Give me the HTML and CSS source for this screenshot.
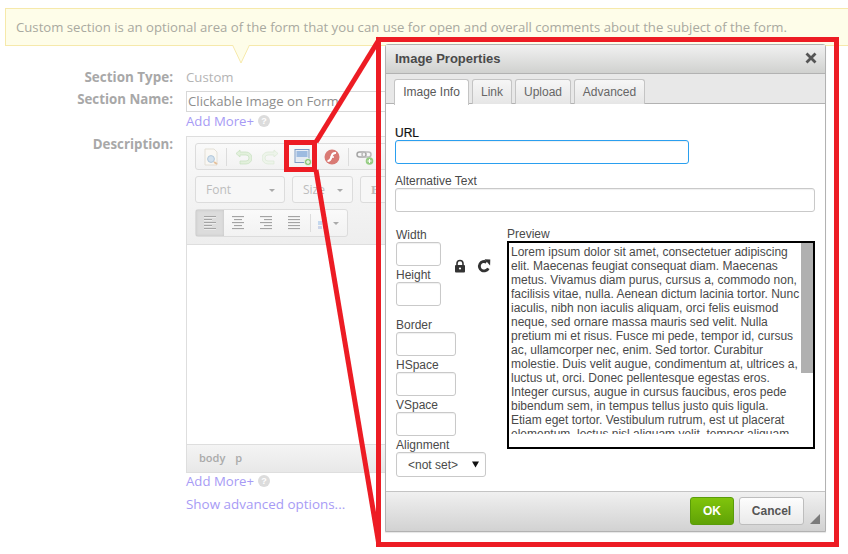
FILE: index.html
```html
<!DOCTYPE html>
<html lang="en">
<head>
<meta charset="utf-8">
<title>Image Properties</title>
<link rel="stylesheet" href="styles.css">
</head>
<body>
<div class="page">
  <div class="banner">Custom section is an optional area of the form that you can use for open and overall comments about the subject of the form.
    <svg class="tip" viewBox="0 0 18 19" width="18" height="19"><path d="M.5 0L9 18 17.500 0z" fill="#fefde9"/><path d="M.5 0L9 18 17.500 0" fill="none" stroke="#f6e9ab"/></svg>
  </div>
  <div class="form">
    <div class="row row-type"><div class="lbl">Section Type:</div><div class="val">Custom</div></div>
    <div class="row row-name"><div class="lbl">Section Name:</div>
      <div class="fld"><div class="nameinput">Clickable Image on Form</div>
        <div class="more">Add More+ <span class="help">?</span></div></div></div>
    <div class="row row-desc"><div class="lbl desc-lbl">Description:</div>
      <div class="fld">
        <div class="editor">
          <div class="toolbar">
            <div class="tgroup t1">
              <svg class="ti faded" viewBox="0 0 18 18" width="18" height="18"><path d="M3 1h9l3 3v13H3z" fill="#fbf9f3" stroke="#ddd8cc"/><circle cx="9" cy="11" r="3.400" fill="#c9dcec" stroke="#9bb8d2"/><path d="M12 14l3 2" stroke="#e0b080" stroke-width="2"/></svg>
              <span class="tsep"></span>
              <svg class="ti" viewBox="0 0 18 18" width="18" height="18"><path d="M6 2L2 5.500 6 9V7h6a3 3 0 0 1 0 6H6v3h6a6 6 0 0 0 0-12H6z" fill="#e2f0dc" stroke="#c6dfbe" stroke-width=".7"/></svg>
              <svg class="ti" viewBox="0 0 18 18" width="18" height="18"><path d="M12 2l4 3.500L12 9V7H6a3 3 0 0 0 0 6h6v3H6A6 6 0 0 1 6 4h6z" fill="#edf4ea" stroke="#dbe8d6" stroke-width=".7"/></svg>
              <svg class="ti ti-img" viewBox="0 0 18 18" width="18" height="18"><rect x="1" y="1.500" width="14" height="13" fill="#e8eef6" stroke="#7f9cc4"/><path d="M2.500 3h11v6h-11z" fill="#9dbbe0"/><path d="M2.500 9h11v4h-11z" fill="#e4eaf2"/><circle cx="14" cy="14" r="3.600" fill="#8cc77a" stroke="#fff" stroke-width=".6"/><path d="M14 12v4M12 14h4" stroke="#fff"/></svg>
              <svg class="ti ti-fl" viewBox="0 0 18 18" width="18" height="18"><circle cx="9" cy="9" r="7.500" fill="#d97a74"/><path d="M13 5c-3-.5-4 1-4.500 3.500S7 13 4.500 13" fill="none" stroke="#fff" stroke-width="2"/><path d="M7.500 9H11" stroke="#fff" stroke-width="1.500"/></svg>
              <span class="tsep"></span>
              <svg class="ti" viewBox="0 0 18 18" width="18" height="18"><rect x="1" y="4" width="9" height="5" rx="2.500" fill="none" stroke="#a6a6a6" stroke-width="1.500"/><rect x="6" y="4" width="9" height="5" rx="2.500" fill="none" stroke="#bcbcbc" stroke-width="1.500"/><circle cx="13.500" cy="13" r="3.800" fill="#96cd84"/><path d="M13.500 11v4M11.500 13h4" stroke="#fff"/></svg>
            </div>
            <div class="trow">
              <div class="combo c-font">Font<span class="caret"></span></div>
              <div class="combo c-size">Size<span class="caret"></span></div>
              <div class="combo c-fmt"><span class="serif-b">B</span></div>
            </div>
            <div class="tgroup t3">
              <span class="al active"><i class="l1"></i><i class="l2"></i><i class="l1"></i><i class="l2"></i><i class="l1"></i></span>
              <span class="al center"><i class="l1"></i><i class="l2"></i><i class="l1"></i><i class="l2"></i><i class="l1"></i></span>
              <span class="al right"><i class="l1"></i><i class="l2"></i><i class="l1"></i><i class="l2"></i><i class="l1"></i></span>
              <span class="al"><i class="l1"></i><i class="l1"></i><i class="l1"></i><i class="l1"></i><i class="l1"></i></span>
              <span class="tsep"></span>
              <svg class="ti-col" viewBox="0 0 14 14" width="14" height="14"><rect x="6" y="1" width="4" height="3" fill="#f8ecbc"/><rect x="1" y="5" width="4" height="4" fill="#c4d8ee"/><rect x="6" y="5" width="4" height="4" fill="#c8dcf2"/><rect x="1" y="10" width="4" height="3" fill="#ccd4e8"/><rect x="6" y="10" width="4" height="3" fill="#f8c8dc"/></svg>
              <span class="caret c3"></span>
            </div>
          </div>
          <div class="edit-body"></div>
          <div class="pathbar"><span>body</span><span>p</span></div>
        </div>
        <div class="more more2">Add More+ <span class="help">?</span></div>
        <div class="adv">Show advanced options...</div>
      </div>
    </div>
  </div>
</div>

<div class="dialog">
  <div class="dtitle"><span>Image Properties</span><svg class="dclose" viewBox="0 0 12 12" width="12" height="12"><path d="M1.500 1.500l9 9M10.500 1.500l-9 9" stroke="#555" stroke-width="2.800"/></svg></div>
  <div class="tabs">
    <div class="tab on">Image Info</div><div class="tab t-link">Link</div><div class="tab t-up">Upload</div><div class="tab t-adv">Advanced</div>
  </div>
  <div class="dbody">
    <label class="f-url">URL</label>
    <div class="inp url"></div>
    <label class="f-alt">Alternative Text</label>
    <div class="inp alt"></div>
    <div class="cols">
      <div class="leftcol">
        <div class="sizes">
          <div class="wh">
            <label>Width</label><div class="inp small"></div>
            <label>Height</label><div class="inp small"></div>
          </div>
          <svg class="lock" viewBox="0 0 12 14" width="12" height="14"><path d="M3 7V4.500a3 3 0 0 1 6 0V7" fill="none" stroke="#333" stroke-width="1.600"/><rect x="1" y="6" width="10" height="7.500" rx="1" fill="#333"/><circle cx="6" cy="9.500" r="1.100" fill="#fff"/></svg>
          <svg class="refresh" viewBox="0 0 14 14" width="14" height="14"><path d="M11.300 9.300A4.700 4.700 0 1 1 9.500 3.200" fill="none" stroke="#333" stroke-width="2.800"/><path d="M7.500 .2l5.800 .2-.2 6z" fill="#333"/></svg>
        </div>
        <label class="f-border">Border</label><div class="inp mid"></div>
        <label>HSpace</label><div class="inp mid"></div>
        <label>VSpace</label><div class="inp mid"></div>
        <label>Alignment</label>
        <div class="inp sel"><span>&lt;not set&gt;</span><svg viewBox="0 0 8 7" width="7" height="7"><path d="M0 0h8L4 7z" fill="#111"/></svg></div>
      </div>
      <div class="rightcol">
        <label>Preview</label>
        <div class="preview">
          <div class="ptext">Lorem ipsum dolor sit amet, consectetuer adipiscing elit. Maecenas feugiat consequat diam. Maecenas metus. Vivamus diam purus, cursus a, commodo non, facilisis vitae, nulla. Aenean dictum lacinia tortor. Nunc iaculis, nibh non iaculis aliquam, orci felis euismod neque, sed ornare massa mauris sed velit. Nulla pretium mi et risus. Fusce mi pede, tempor id, cursus ac, ullamcorper nec, enim. Sed tortor. Curabitur molestie. Duis velit augue, condimentum at, ultrices a, luctus ut, orci. Donec pellentesque egestas eros. Integer cursus, augue in cursus faucibus, eros pede bibendum sem, in tempus tellus justo quis ligula. Etiam eget tortor. Vestibulum rutrum, est ut placerat elementum, lectus nisl aliquam velit, tempor aliquam eros nunc nonummy metus.</div>
          <div class="thumb"></div>
        </div>
      </div>
    </div>
  </div>
  <div class="dfoot">
    <div class="btn ok">OK</div><div class="btn cancel">Cancel</div>
    <svg class="grip" viewBox="0 0 10 10" width="10" height="10"><path d="M10 0v10H0z" fill="#7b7b7b"/></svg>
  </div>
</div>

<svg class="marks" width="848" height="554" viewBox="0 0 848 554">
  <rect x="378.500" y="39.500" width="458" height="505" fill="none" stroke="#ed1c24" stroke-width="5"/>
  <rect x="286.500" y="142.500" width="28" height="27" fill="none" stroke="#ed1c24" stroke-width="5"/>
  <path d="M316 142L380 38" stroke="#ed1c24" stroke-width="5" fill="none"/>
  <path d="M316 170L379 545" stroke="#ed1c24" stroke-width="5" fill="none"/>
</svg>
</body>
</html>
```
FILE: styles.css
```css
* { box-sizing: border-box; }
html, body { margin: 0; padding: 0; background: #fff; }
body { width: 848px; height: 554px; overflow: hidden; position: relative; font-family: "Open Sans", sans-serif; }
.page { padding-top: 8px; }

.banner { position: relative; margin-left: 5px; height: 38px; background: #fefde9; border: 1px solid #f6e9ab; border-right: 0; color: #a9a9a0; font-size: 13.160px; line-height: 37px; padding-left: 10px; white-space: nowrap; }
.tip { position: absolute; left: 226px; top: 36px; display: block; }

.form { padding-top: 21px; }
.row { display: grid; grid-template-columns: 173px 1fr; column-gap: 13px; }
.lbl { text-align: right; font-size: 13.300px; font-weight: 700; color: #a8a8a8; line-height: 20px; }
.row-type .lbl { font-size: 13.450px; }
.val { font-size: 13.200px; color: #b4b4b4; line-height: 20px; }
.row-type { height: 22px; }
.nameinput { width: 300px; height: 21px; margin-top: 2px; border: 1px solid #d8d8d8; font-size: 13.200px; color: #8e8e8e; line-height: 19px; padding-left: 1px; white-space: nowrap; overflow: hidden; }
.more { font-size: 13.200px; color: #a79bf5; line-height: 18px; height: 18px; display: flex; align-items: center; gap: 4px; }
.help { width: 12px; height: 12px; border-radius: 50%; background: #dcdcdc; color: #fff; font: 700 9px/12px "Liberation Sans", sans-serif; text-align: center; }
.row-desc { margin-top: 6px; }
.desc-lbl { margin-top: -2px; }

.editor { width: 300px; height: 337px; border: 1px solid #dedede; border-right: 0; background: #fff; }
.toolbar { height: 108px; background: linear-gradient(#fafafa, #eeeeee); border-bottom: 1px solid #dedede; padding: 6px 0 0 8px; display: flex; flex-direction: column; gap: 6px; }
.tgroup { border: 1px solid #dcdcdc; border-radius: 3px; background: linear-gradient(#fafafa, #f2f2f2); display: flex; align-items: center; }
.t1 { width: 260px; height: 27px; padding-left: 6px; }
.ti { display: block; flex: none; margin-right: 10px; }
.faded { opacity: .75; }
.tsep { width: 1px; height: 18px; background: #dcdcdc; flex: none; margin-right: 7px; }
.t1 .ti:first-child { margin-right: 6px; }
.ti-img { margin-left: 4px; }
.ti-fl { margin-left: 1px; margin-right: 7px; }
.trow { display: flex; gap: 7px; height: 27px; }
.combo { position: relative; height: 27px; border: 1px solid #dcdcdc; border-radius: 3px; background: #f7f7f7; color: #bdbdbd; font-size: 12px; line-height: 25px; padding-left: 10px; }
.c-font { width: 90px; }
.c-size { width: 61px; }
.c-fmt { width: 60px; }
.serif-b { font: 700 13px/25px "Liberation Serif", serif; color: #bbb; }
.caret { position: absolute; right: 9px; top: 12px; width: 0; height: 0; border: 3px solid transparent; border-top: 3px solid #aaa; }
.t3 { width: 153px; height: 28px; }
.al { width: 28px; height: 26px; display: flex; flex-direction: column; justify-content: center; gap: 1px; padding: 0 8px; flex: none; }
.al i { display: block; height: 2px; border-top: 1px solid #a4a4a4; border-bottom: 1px solid #ececec; }
.al .l2 { width: 8px; }
.al.center { align-items: center; }
.al.right { align-items: flex-end; }
.al.center .l1, .al.right .l1 { width: 12px; }
.al.active { background: #dcdcdc; box-shadow: inset 0 0 3px #c4c4c4; }
.t3 .tsep { margin: 0 6px 0 2px; }
.ti-col { flex: none; }
.caret.c3 { position: static; display: block; margin: 3px 0 0 2px; }
.edit-body { height: 200px; border-bottom: 1px solid #dedede; }
.pathbar { height: 27px; background: linear-gradient(#f4f4f4, #e8e8e8); padding-left: 12px; font-size: 11px; font-weight: 600; color: #aaa; line-height: 26px; display: flex; gap: 10px; }
.more2 { margin-top: -2px; height: 20px; line-height: 20px; }
.adv { font-size: 13.450px; color: #a79bf5; line-height: 20px; margin-top: 3px; }

.dialog { position: absolute; left: 385px; top: 44px; width: 441px; height: 488px; background: #fff; border: 1px solid #b2b2b2; border-radius: 3px 3px 0 0; display: flex; flex-direction: column; font-family: "Liberation Sans", sans-serif; box-shadow: 0 1px 1px rgba(0,0,0,.1); }
.dtitle { height: 29px; flex: none; background: linear-gradient(#f1f1f1, #d0d1cf); border-bottom: 1px solid #b2b2b2; display: flex; align-items: center; justify-content: space-between; padding: 0 8px 2px 9px; font-size: 13px; font-weight: 700; color: #4a4a4a; }
.tabs { height: 30px; flex: none; background: #e8e8e8; border-bottom: 1px solid #b2b2b2; display: flex; gap: 3px; padding: 5px 0 0 8px; }
.tab { height: 25px; border: 1px solid #c4c4c4; border-bottom: 0; border-radius: 3px 3px 0 0; background: linear-gradient(#f6f6f6, #e6e6e6); font-size: 12px; color: #666; line-height: 24px; text-align: center; }
.tab.on { width: 75px; height: 26px; background: #fff; color: #595959; position: relative; z-index: 1; }
.t-link { width: 40px; }
.t-up { width: 56px; }
.t-adv { width: 71px; }
.dbody { flex: 1; padding: 22px 10px 0 9px; display: flex; flex-direction: column; font-size: 12px; color: #4a4a4a; }
.dbody label { display: block; font-size: 12px; line-height: 14px; height: 14px; color: #4a4a4a; }
.f-url { color: #111 !important; -webkit-text-stroke: .2px #111; }
.inp { border: 1px solid #c9c9c9; border-radius: 3px; background: #fff; box-shadow: inset 0 1px 1px #f0f0f0; }
.url { width: 294px; height: 24px; border-color: #2a9fef; }
.f-alt { margin-top: 10px; }
.alt { width: 420px; height: 24px; }
.cols { display: flex; margin-top: 16px; }
.leftcol { width: 112px; padding-left: 1px; flex: none; }
.sizes { position: relative; height: 90px; }
.inp.small { width: 45px; height: 24px; margin-bottom: 2px; }
.lock { position: absolute; left: 58px; top: 31px; }
.refresh { position: absolute; left: 81px; top: 31px; }
.inp.mid { width: 60px; height: 24px; margin-bottom: 2px; }
.inp.sel { width: 90px; height: 25px; display: flex; align-items: center; justify-content: space-between; padding: 0 6px 0 11px; font-size: 12px; color: #4a4a4a; }
.rightcol { width: 308px; margin-top: -1px; }
.preview { position: relative; width: 308px; height: 208px; border: 2px solid #000; padding: 2px 0 0 2px; }
.ptext { width: 290px; height: 189px; overflow: hidden; font-size: 12px; line-height: 14px; color: #4a4a4a; }
.thumb { position: absolute; left: 292px; top: 0; width: 12px; height: 130px; background: #b0b0b0; }
.dfoot { height: 40px; flex: none; position: relative; background: linear-gradient(#f0f0f0, #d2d2d2); border-top: 1px solid #c4c4c4; display: flex; justify-content: flex-end; gap: 5px; padding: 5px 21px 0 0; }
.btn { height: 28px; border-radius: 3px; font-size: 12px; font-weight: 700; text-align: center; line-height: 26px; }
.ok { width: 44px; background: linear-gradient(#80c40c, #60a206); border: 1px solid #5a9c0a; color: #fff; }
.cancel { width: 65px; background: linear-gradient(#fdfdfd, #eaeaea); border: 1px solid #bdbdbd; color: #555; }
.grip { position: absolute; right: 5px; bottom: 7px; }

.marks { position: absolute; left: 0; top: 0; pointer-events: none; }
```
